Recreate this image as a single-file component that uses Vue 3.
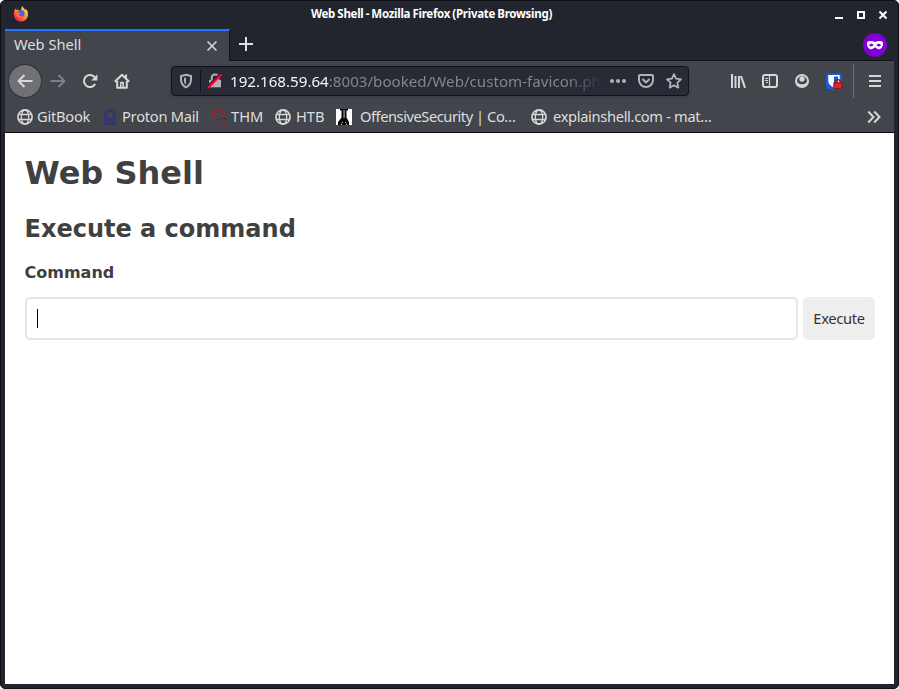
<script setup>
import { ref } from 'vue'

const command = ref('')
const bookmarks = [
  { icon: 'globe', label: 'GitBook' },
  { icon: 'proton', label: 'Proton Mail' },
  { icon: 'cloud', label: 'THM' },
  { icon: 'globe', label: 'HTB' },
  { icon: 'offsec', label: 'OffensiveSecurity | Co…' },
  { icon: 'globe', label: 'explainshell.com - mat…' },
]
</script>

<template>
  <div class="desktop">
    <div class="window">
      <header class="titlebar">
        <svg class="firefox" viewBox="0 0 16 16" width="16" height="16">
          <defs>
            <linearGradient id="flame" x1="0.85" y1="0.1" x2="0.2" y2="0.95">
              <stop offset="0" stop-color="#ffe14a" />
              <stop offset="0.45" stop-color="#ff9332" />
              <stop offset="0.8" stop-color="#ff3d48" />
              <stop offset="1" stop-color="#e52362" />
            </linearGradient>
          </defs>
          <path d="M1 6C1.300 4.500 2 3.300 3 2.600L3.500 4 5.300 3.800 7.500 5 8.200 3.200C8.200 1.800 8.800.8 9.600.3 10 2 11.400 2.700 12.400 4L13 3C14.400 4.500 15 6.300 15 8.400 15 12.500 11.900 15.500 8 15.500S.9 12.500.9 8.500z" fill="url(#flame)" />
          <circle cx="8" cy="7.600" r="3.600" fill="#4a63d8" />
          <path d="M3.800 6.700c1.400-.5 2.500-.2 3.700.2-.2 1-1.500 1-1.700 1.900.7 1.400 3 1.600 4.200.6-.8 2.500-5.500 2.900-6.500-.5z" fill="#ff7139" />
        </svg>
        <span class="window-title">Web Shell - Mozilla Firefox (Private Browsing)</span>
        <svg class="controls" viewBox="0 0 56 16" width="56" height="16" fill="none" stroke="#fff">
          <path d="M1 10h8" stroke-width="2" />
          <path d="M24 4h6v6h-6z" stroke-width="2" />
          <path d="M45.500 3.500l7 7m0-7l-7 7" stroke-width="2" />
        </svg>
      </header>

      <div class="tabs">
        <div class="tab">
          <span class="tab-label">Web Shell</span>
          <svg viewBox="0 0 12 12" width="12" height="12" fill="none" stroke="#d7d7d4" stroke-width="1.600"><path d="M1.500 1.500l9 9m0-9l-9 9" /></svg>
        </div>
        <svg class="new-tab" viewBox="0 0 16 16" width="16" height="16" fill="none" stroke="#e0e0df" stroke-width="2"><path d="M1 8h14M8 1v14" /></svg>
        <svg class="private" viewBox="0 0 24 24" width="24" height="24">
          <circle cx="12" cy="12" r="12" fill="#8000d7" />
          <path fill="#fff" fill-rule="evenodd" d="M4 9.200C5.500 7.400 9 7.600 12 9c3-1.400 6.500-1.600 8 .2.400 3.800-1.500 7.100-4.300 7.100-1.800 0-2.500-1.700-3.700-1.700s-1.900 1.700-3.700 1.700C5.500 16.300 3.600 13 4 9.200zM6 12.200c1.500 1.700 3.500 1.500 4.500.1-1.200-1.900-3.300-1.900-4.500-.1zm7.500.1c1 1.400 3 1.600 4.500-.1-1.200-1.800-3.300-1.800-4.500.1z" />
        </svg>
      </div>

      <nav class="toolbar">
        <span class="button back"><svg viewBox="0 0 16 16" width="16" height="16" class="line"><path d="M15.500 8H1.500M7.500 2L1.500 8l6 6" /></svg></span>
        <span class="button forward"><svg viewBox="0 0 16 16" width="16" height="16" class="line"><path d="M.5 8h14M8.500 2l6 6-6 6" /></svg></span>
        <span class="button"><svg viewBox="0 0 16 16" width="16" height="16" class="line"><path d="M13 4.700A6 6 0 1 0 13.200 11" /><path d="M15.400 1.300v6.200H9.200z" fill="#d7d7d4" stroke="none" /></svg></span>
        <span class="button"><svg viewBox="0 0 16 16" width="16" height="16" class="line"><path d="M.8 8.700L8 1.700l7.200 7M3.200 8v6.800h9.600V8" /><path d="M6.800 14V9.500h2.400V14" stroke-width="1.500" /><path d="M12 1.500v4" /></svg></span>
        <div class="urlbar">
          <svg class="shield" viewBox="0 0 16 16" width="16" height="16" fill="none" stroke="#b2b2b5" stroke-width="2"><path d="M8 1.800L13 3v3.500c0 4-1.800 6.200-5 7.900-3.200-1.700-5-3.900-5-7.900V3z" /><path d="M8 4.600L6 5v3c0 1.500.6 2.700 2 3.700z" fill="#b2b2b5" stroke="none" /></svg>
          <i class="split"></i>
          <svg class="lock" viewBox="0 0 16 16" width="16" height="16" fill="none"><path d="M4.700 7V4.700C4.700 2.700 6 1.500 8 1.500s3.300 1.200 3.300 3.200V7" stroke="#b2b2b5" stroke-width="2" /><path d="M2 7h12v7.300H2z" fill="#b2b2b5" /><path d="M-.3 14.300L13.700.2" stroke="#292a36" stroke-width="2" /><path d="M1 15L14.700 1.300" stroke="#ff0039" stroke-width="2" /></svg>
          <span class="address"><b>192.168.59.64</b>:8003/booked/Web/custom-favicon.php</span>
          <svg class="dots" viewBox="0 0 16 16" width="16" height="16" fill="#b2b2b5"><circle cx="2" cy="8" r="2" /><circle cx="8" cy="8" r="2" /><circle cx="14" cy="8" r="2" /></svg>
          <svg class="pocket" viewBox="0 0 16 16" width="16" height="16" fill="none" stroke="#b2b2b5" stroke-width="2" stroke-linecap="round" stroke-linejoin="round"><path d="M2 2h12q1 0 1 1v4a7 7 0 0 1-14 0V3q0-1 1-1z" /><path d="M5 6.500l3 3 3-3" /></svg>
          <svg class="star" viewBox="0 0 16 16" width="16" height="16" fill="none" stroke="#b2b2b5" stroke-width="1.800" stroke-linejoin="round"><path d="M8 1.200l2.100 4.500 4.900.6-3.600 3.400.9 4.900L8 12.200l-4.300 2.400.9-4.900L1 6.300l4.900-.6z" /></svg>
        </div>
        <div class="actions">
          <span class="button"><svg viewBox="0 0 16 16" width="16" height="16" class="line"><path d="M2 1v14M5.500 3v12M9 3v12M11 3.200l4 11.600" /></svg></span>
          <span class="button"><svg viewBox="0 0 16 16" width="16" height="16" class="line"><rect x="1" y="2" width="14" height="12" rx="2" /><path d="M7.500 2v12" stroke-width="1.200" /><path d="M3 5.500h3M3 7.500h3M4 9.500h2" stroke-width="1" /></svg></span>
          <span class="button"><svg viewBox="0 0 16 16" width="16" height="16" class="line"><circle cx="8" cy="8" r="6" /><circle cx="8" cy="6" r="2.700" fill="#d7d7d4" stroke="none" /><path d="M3 8.800c2 3.400 8 3.400 10 0L12 12.500 8 14l-4-1.500z" fill="#d7d7d4" stroke="none" /></svg></span>
          <span class="button"><svg viewBox="0 0 16 16" width="16" height="16"><rect width="16" height="16" rx="2" y=".3" fill="#175ddc" /><path d="M2.300 2h11.400v6c0 3-2 4.800-5.700 6.500C4.300 12.800 2.300 11 2.300 8z" fill="#fff" /><path d="M8 3.500h4V8c0 2-1.500 3.300-4 4.600z" fill="#175ddc" /><path d="M9.300 10V8.800c0-2.600 5-2.600 5 0V10" fill="none" stroke="#8b1e2c" stroke-width="1.500" /><path d="M7.800 9.700h8v5.800h-8z" fill="#ed1c24" stroke="#7b1620" stroke-width=".9" /></svg></span>
          <i class="divider"></i>
          <span class="button menu"><svg viewBox="0 0 14 14" width="14" height="14" class="line"><path d="M1 2h12M1 7h12M1 12h12" /></svg></span>
        </div>
      </nav>

      <div class="bookmarks">
        <div v-for="item in bookmarks" :key="item.label" class="bookmark">
          <svg v-if="item.icon === 'globe'" viewBox="0 0 16 16" width="16" height="16" fill="none" stroke="#d7d7d4" stroke-width="1.300"><circle cx="8" cy="8" r="7.100" stroke-width="1.700" /><ellipse cx="8" cy="8" rx="3.700" ry="7" /><path d="M1.500 5.500h13M1.500 10.500h13" /></svg>
          <svg v-else-if="item.icon === 'proton'" viewBox="0 0 16 16" width="16" height="16"><path fill="#35346b" fill-rule="evenodd" d="M2 16V6C2 2.600 4.300.4 8 .4S14 2.600 14 6v10zM4.800 7.500L8 10l3.200-2.500V6C11.200 4.200 9.900 3 8 3S4.800 4.200 4.800 6z" /><path d="M2 10l6 3.500 6-3.500" fill="none" stroke="#403f68" stroke-width=".8" /></svg>
          <svg v-else-if="item.icon === 'cloud'" viewBox="0 0 16 16" width="16" height="16" fill="none" stroke="#b01c24" stroke-width="1.200"><path d="M7.500 9H3C.9 9 .3 8 .4 6.800.5 5.600 1.600 5 3 5.200 3.200 2.300 5 .8 7.200.9c2 .1 3.300 1.100 3.700 2.800C13 3.300 14.500 4.500 14.600 6" /><path d="M9 7.500h2m1 0h3M11 12.500h3M9 15.300h2m1.500 0h3" /><path d="M6 10.500h2m3-1h4M11 14h3" stroke="#30343c" /></svg>
          <svg v-else viewBox="0 0 16 16" width="16" height="16"><path d="M0 0h16v16H0z" fill="#fff" /><path d="M4 0h8v1.500h-1.500v7L13 13v3h-2l-1.500-3H9v1h1v2H6v-2h1v-1h-.5L5 16H2v-3l3.500-4.500v-7H4z" fill="#080808" /><path d="M7.500 1h1.200v8H7.500z" fill="#aaa" /></svg>
          <span>{{ item.label }}</span>
        </div>
        <svg class="overflow" viewBox="0 0 14 14" width="14" height="14" fill="none" stroke="#d7d7d4" stroke-width="2"><path d="M1.200 1.500L6.500 7l-5.300 5.500M7.200 1.500L12.500 7l-5.300 5.500" /></svg>
      </div>

      <main class="page">
        <h1>Web Shell</h1>
        <h2>Execute a command</h2>
        <label for="command">Command</label>
        <form class="row" @submit.prevent>
          <div class="field"><i class="caret"></i><input id="command" v-model="command" type="text"></div>
          <button type="submit">Execute</button>
        </form>
      </main>
    </div>
  </div>
</template>

<style>
body { background: #fff; overflow: hidden; }
</style>

<style scoped>
* { box-sizing: border-box; }
svg { display: block; flex: none; overflow: visible; }
.desktop { width: 899px; height: 689px; font-family: "Noto Sans", sans-serif; }
.window { display: flex; flex-direction: column; height: 689px; padding: 0 4px 4px; background: #22252e; border: 1px solid #0e1016; border-radius: 5px; }
.titlebar { height: 28px; display: flex; align-items: center; padding: 0 4px 0 8px; }
.firefox { margin-top: -2px; }
.window-title { flex: 1; text-align: center; font-size: 11.500px; font-weight: 700; color: #fff; letter-spacing: -.27px; word-spacing: -.5px; white-space: nowrap; margin: -3px 0 0; }
.controls { margin-top: 1px; }
.tabs { height: 32px; display: flex; align-items: center; border-bottom: 1px solid #101218; }
.tab { width: 225px; height: 32px; align-self: flex-start; display: flex; align-items: center; justify-content: space-between; background: #42454c; border-top: 2px solid #2374ff; border-right: 1px solid #101218; padding: 0 11px 0 9px; color: #dedfdc; font-size: 14.670px; }
.tab-label { margin-top: -4px; }
.tab svg { margin-top: -1px; }
.new-tab { margin: -2px 0 0 8px; }
.private { margin: 1px 7px 0 auto; }
.toolbar { height: 40px; flex: none; display: flex; align-items: center; background: #42454c; padding-left: 4px; }
.line { fill: none; stroke: #d7d7d4; stroke-width: 2; stroke-linejoin: round; }
.button { width: 32px; height: 32px; display: flex; align-items: center; justify-content: center; flex: none; }
.back { border-radius: 50%; background: #707175; box-shadow: 0 0 0 1px #303238; margin-right: 1px; }
.forward { opacity: .4; }
.urlbar { width: 518px; height: 30px; margin-left: 33px; display: flex; align-items: center; background: #282a35; border: 1px solid #111218; border-radius: 4px; box-shadow: 0 1px 3px rgba(0, 0, 0, .16); }
.shield { margin-left: 6px; }
.split { width: 1px; height: 22px; background: #101218; margin: 0 6px; }
.address { width: 371px; margin-left: 7px; overflow: hidden; white-space: nowrap; font-size: 15.150px; color: #85868b; mask-image: linear-gradient(to right, #000 335px, transparent 373px); }
.address b { color: #f5f5f4; font-weight: 400; }
.dots { margin-left: 9px; }
.pocket { margin-left: 12px; }
.star { margin-left: 12px; }
.actions { margin-left: 33px; display: flex; align-items: center; }
.divider { width: 1px; height: 34px; background: #6d6f73; margin-left: 3px; }
.menu { margin-left: 5px; }
.bookmarks { height: 32px; flex: none; display: grid; grid-template-columns: 85px 109px 64px 61px 195px 336px 14px; align-items: center; background: #42454c; border-bottom: 1px solid #08090c; padding: 0 0 0 12px; color: #dedfdc; font-size: 14.670px; }
.bookmark { display: flex; align-items: center; gap: 4px; white-space: nowrap; letter-spacing: -.25px; }
.bookmark span { margin-top: -2px; }
.bookmark:nth-child(3) { letter-spacing: 0; }
.bookmark:nth-child(4) { gap: 5px; letter-spacing: 0; }
.bookmark:nth-child(5) { gap: 8px; letter-spacing: -.45px; }
.bookmark:nth-child(6) { gap: 6px; letter-spacing: -.33px; }
.page { flex: 1; background: #fff; padding: 19px 19px 0 20px; color: #404040; font-family: "DejaVu Sans", sans-serif; }
h1, h2, label { position: relative; left: -.5px; }
h1 { margin: 0; font-size: 32px; line-height: 42px; }
h2 { margin: 20px 0 0; font-size: 24px; line-height: 30px; }
label { display: block; margin-top: 19px; font-size: 16px; line-height: 20px; font-weight: 700; }
.row { display: flex; gap: 5px; margin-top: 14px; }
.field { width: 773px; height: 43px; display: flex; align-items: center; border: 2px solid #e5e5e5; border-radius: 5px; padding-left: 10px; }
.caret { width: 1px; height: 19px; background: #000; }
input { flex: 1; border: 0; outline: 0; padding: 0; height: 30px; background: transparent; }
button { width: 72px; height: 43px; border: 0; border-radius: 5px; background: #eee; color: #333; font-family: "Noto Sans", sans-serif; font-size: 14.670px; letter-spacing: -.3px; padding: 0 0 2px; }
</style>
